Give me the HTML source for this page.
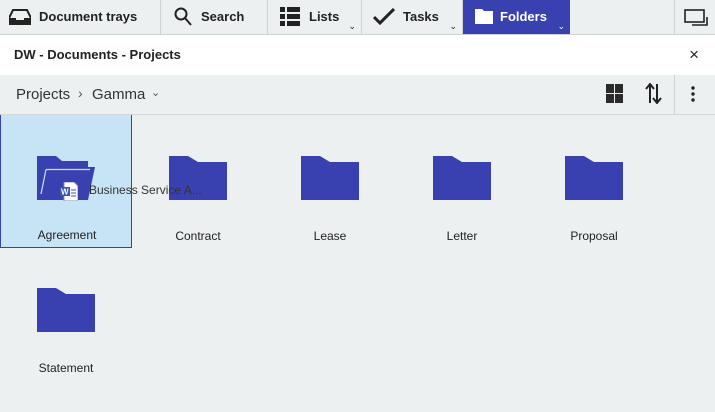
<!DOCTYPE html>
<html><head><meta charset="utf-8"><style>
*{margin:0;padding:0;box-sizing:border-box}
body{width:715px;height:412px;overflow:hidden;background:#edf0f1;font-family:"Liberation Sans",sans-serif;position:relative;color:#222}
.top{position:absolute;left:0;top:0;width:715px;height:35px;background:#edf0f1;border-bottom:1px solid #cfd3d6}
.tab{position:absolute;top:0;height:34px;border-right:1px solid #cfd3d6;font-weight:bold;font-size:13px;line-height:34px;color:#222}
.tab svg{position:absolute}
.chev{position:absolute;bottom:3px;right:5px;font-size:9px;line-height:9px;font-weight:normal}
.title{position:absolute;left:0;top:35px;width:715px;height:40px;background:#fff;font-weight:bold;font-size:13px;line-height:40px;padding-left:14px}
.tool{position:absolute;left:0;top:75px;width:715px;height:40px;border-bottom:1px solid #d4d8db;background:#edf0f1}
.item{position:absolute;width:132px;height:133px;text-align:center;font-size:12px;color:#222}
.item .lbl{position:absolute;left:0;width:132px;top:114px}
.item svg{position:absolute;left:37px;top:41px}
</style></head><body>
<div class="top">
 <div class="tab" style="left:0;width:161px">
  <svg style="left:9px;top:9px" width="22" height="16" viewBox="0 0 22 16"><path d="M4 1h14l4 8v6H0V9z" fill="none" stroke="#222" stroke-width="2"/><path d="M0 9h7v2h8V9h7v7H0z" fill="#222"/></svg>
  <span style="position:absolute;left:39px">Document trays</span></div>
 <div class="tab" style="left:161px;width:107px">
  <svg style="left:13px;top:7px" width="18" height="20" viewBox="0 0 18 20"><circle cx="7" cy="7" r="5.5" fill="none" stroke="#222" stroke-width="2"/><path d="M11 11l6 7" stroke="#222" stroke-width="2"/></svg>
  <span style="position:absolute;left:40px">Search</span></div>
 <div class="tab" style="left:268px;width:94px">
  <svg style="left:12px;top:7px" width="20" height="19" viewBox="0 0 20 19"><rect x="0" y="0" width="5" height="5" fill="#222"/><rect x="7" y="0" width="13" height="5" fill="#222"/><rect x="0" y="7" width="5" height="5" fill="#222"/><rect x="7" y="7" width="13" height="5" fill="#222"/><rect x="0" y="14" width="5" height="5" fill="#222"/><rect x="7" y="14" width="13" height="5" fill="#222"/></svg>
  <span style="position:absolute;left:41px">Lists</span><span class="chev">&#8964;</span></div>
 <div class="tab" style="left:362px;width:101px">
  <svg style="left:11px;top:8px" width="22" height="17" viewBox="0 0 22 17"><path d="M1 9l6 6L21 1" fill="none" stroke="#222" stroke-width="3"/></svg>
  <span style="position:absolute;left:41px">Tasks</span><span class="chev">&#8964;</span></div>
 <div class="tab" style="left:463px;width:107px;background:#3941b0;color:#fff;border:none">
  <svg style="left:12px;top:9px" width="18" height="15" viewBox="0 0 18 15"><path d="M0 0h7l2 2h9v13H0z" fill="#fff"/></svg>
  <span style="position:absolute;left:37px">Folders</span><span class="chev" style="color:#fff">&#8964;</span></div>
 <div class="tab" style="left:674px;width:41px;border-right:none;border-left:1px solid #cfd3d6">
  <svg style="left:9px;top:9px" width="24" height="17" viewBox="0 0 24 17"><rect x="1" y="1" width="19" height="12" fill="none" stroke="#222" stroke-width="1.6"/><path d="M23 8v8H8" fill="none" stroke="#222" stroke-width="1.6"/></svg></div>
</div>
<div class="title">DW - Documents - Projects<span style="position:absolute;right:16px;top:0;font-weight:normal;font-size:17px">&#215;</span></div>
<div class="tool">
 <span style="position:absolute;left:16px;top:11px;font-size:15px;color:#333">Projects</span>
 <span style="position:absolute;left:78px;top:10px;font-size:14px;color:#555">&#8250;</span>
 <span style="position:absolute;left:92px;top:11px;font-size:15px;color:#333">Gamma</span>
 <span style="position:absolute;left:151px;top:11px;font-size:11px;color:#555">&#8964;</span>
 <svg style="position:absolute;left:606px;top:9px" width="18" height="19" viewBox="0 0 18 19"><rect x="0" y="0" width="8" height="9" fill="#2a2a2a"/><rect x="9" y="0" width="8" height="9" fill="#2a2a2a"/><rect x="0" y="10" width="8" height="9" fill="#2a2a2a"/><rect x="9" y="10" width="8" height="9" fill="#2a2a2a"/></svg>
 <svg style="position:absolute;left:645px;top:8px" width="18" height="21" viewBox="0 0 18 21"><path d="M5 20V2M1 6l4-5 4 5M12 1v18M8 15l4 5 4-5" fill="none" stroke="#222" stroke-width="2"/></svg>
 <div style="position:absolute;left:674px;top:0;width:1px;height:40px;background:#cfd3d6"></div>
 <svg style="position:absolute;left:691px;top:11px" width="4" height="16" viewBox="0 0 4 16"><circle cx="2" cy="2" r="1.7" fill="#222"/><circle cx="2" cy="8" r="1.7" fill="#222"/><circle cx="2" cy="14" r="1.7" fill="#222"/></svg>
</div>
<div class="item" style="left:132px;top:115px"><svg width="58" height="44" viewBox="0 0 58 44"><path d="M0 0h19l10 6h29v38H0z" fill="#3941b0"/></svg><div class="lbl">Contract</div></div>
<div class="item" style="left:264px;top:115px"><svg width="58" height="44" viewBox="0 0 58 44"><path d="M0 0h19l10 6h29v38H0z" fill="#3941b0"/></svg><div class="lbl">Lease</div></div>
<div class="item" style="left:396px;top:115px"><svg width="58" height="44" viewBox="0 0 58 44"><path d="M0 0h19l10 6h29v38H0z" fill="#3941b0"/></svg><div class="lbl">Letter</div></div>
<div class="item" style="left:528px;top:115px"><svg width="58" height="44" viewBox="0 0 58 44"><path d="M0 0h19l10 6h29v38H0z" fill="#3941b0"/></svg><div class="lbl">Proposal</div></div>
<div class="item" style="left:0;top:247px"><svg width="58" height="44" viewBox="0 0 58 44"><path d="M0 0h19l10 6h29v38H0z" fill="#3941b0"/></svg><div class="lbl">Statement</div></div>
<div class="item" style="left:0;top:115px;background:#c7e4f7;border:1px solid #3941b0;border-top:none;z-index:2">
 <svg width="58" height="44" viewBox="0 0 58 44" style="left:36px"><path d="M0 0h19l6 5h26v39H0z" fill="#3941b0"/><path d="M7 11h51l-7 33H0z" fill="#3941b0"/><path d="M9 13.5h44" stroke="#c7e4f7" stroke-width="1.2"/><path d="M9 13.5L4 38" stroke="#c7e4f7" stroke-width="1.2"/></svg>
 <svg style="left:59px;top:67px" width="18" height="19" viewBox="0 0 18 19"><path d="M4 0h10l4 4v15H4z" fill="#fff" stroke="#8a8fa8"/><rect x="0" y="5" width="10" height="9" fill="#3a54b3"/><text x="1" y="12.5" font-size="8" fill="#fff" font-family="Liberation Sans" font-weight="bold">W</text><path d="M11 8h5M11 11h5M11 14h5" stroke="#3a54b3"/></svg>
 <span style="position:absolute;left:88px;top:68px;font-size:12px;color:#333;white-space:nowrap">Business Service A...</span>
 <div class="lbl" style="top:113px">Agreement</div></div>
</body></html>
